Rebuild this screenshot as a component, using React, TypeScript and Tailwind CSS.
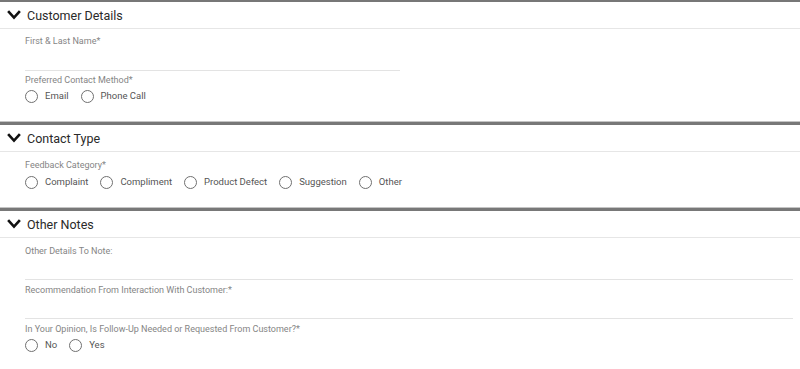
import React from "react";

const Chevron = () => (
  <svg width="14" height="10" viewBox="0 0 14 10" className="shrink-0">
    <polyline points="2,2 7,7.5 12,2" fill="none" stroke="#111" strokeWidth="2.6" strokeLinecap="square" />
  </svg>
);

const Header = ({ title }: { title: string }) => (
  <div className="h-[27px] flex items-center border-b border-[#e6e6e6] pl-[7px]">
    <Chevron />
    <span className="ml-[6px] pt-[2px] text-[12.5px] text-[#2a2a2a] leading-none">{title}</span>
  </div>
);

const Label = ({ children }: { children: React.ReactNode }) => (
  <div className="h-[12px] text-[9px] leading-[12px] text-[#858585]">{children}</div>
);

const Radio = ({ label }: { label: string }) => (
  <div className="flex items-center mr-[12px]">
    <span className="w-[13px] h-[13px] rounded-full border border-[#707070] bg-white" />
    <span className="ml-[7px] text-[9.5px] text-[#555] leading-none">{label}</span>
  </div>
);

const Input = ({ className }: { className: string }) => (
  <div className={`border-b border-[#e3e3e3] ${className}`} />
);

const Divider = () => (
  <div className="h-[4px] border-t border-[#c4c4c4] bg-[#787878]" />
);

export default function App() {
  return (
    <div className="w-[800px] h-[369px] bg-white overflow-hidden" style={{ fontFamily: "Roboto, 'Liberation Sans', sans-serif" }}>
      <div className="h-[2px] bg-[#777]" />
      <Header title="Customer Details" />
      <div className="pl-[25px] pt-[6px] pb-[17px]">
        <Label>First &amp; Last Name*</Label>
        <Input className="w-[375px] h-[24px]" />
        <div className="mt-[3px]">
          <Label>Preferred Contact Method*</Label>
        </div>
        <div className="flex h-[16px] mt-[2px]">
          <Radio label="Email" />
          <Radio label="Phone Call" />
        </div>
      </div>
      <Divider />
      <Header title="Contact Type" />
      <div className="pl-[25px] pt-[7px] pb-[17px]">
        <Label>Feedback Category*</Label>
        <div className="flex h-[16px] mt-[3px]">
          <Radio label="Complaint" />
          <Radio label="Compliment" />
          <Radio label="Product Defect" />
          <Radio label="Suggestion" />
          <Radio label="Other" />
        </div>
      </div>
      <Divider />
      <Header title="Other Notes" />
      <div className="pl-[25px] pr-[7px] pt-[7px]">
        <Label>Other Details To Note:</Label>
        <Input className="w-full h-[23px]" />
        <div className="mt-[4px]">
          <Label>Recommendation From Interaction With Customer:*</Label>
        </div>
        <Input className="w-full h-[23px]" />
        <div className="mt-[4px]">
          <Label>In Your Opinion, Is Follow-Up Needed or Requested From Customer?*</Label>
        </div>
        <div className="flex h-[16px] mt-[2px]">
          <Radio label="No" />
          <Radio label="Yes" />
        </div>
      </div>
    </div>
  );
}
